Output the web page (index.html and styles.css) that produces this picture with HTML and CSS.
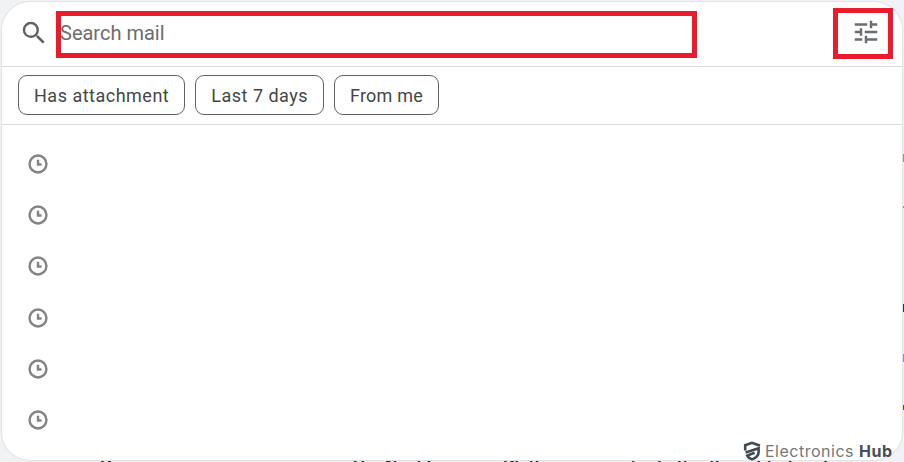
FILE: index.html
```html
<!DOCTYPE html>
<html lang="en">

<head>
    <meta charset="UTF-8">
    <meta name="viewport" content="width=device-width, initial-scale=1.0">
    <title>Search mail</title>
    <link rel="stylesheet" href="styles.css">
</head>

<body>
    <div class="behind-text">
        <span class="behind-left">Basic</span>
        <span class="behind-right">The Next Learning Platform can enter better thought of and</span>
    </div>
    <span class="edge-mark edge-mark-1"></span>
    <span class="edge-mark edge-mark-2"></span>
    <span class="edge-mark edge-mark-3"></span>
    <span class="edge-mark edge-mark-4"></span>
    <span class="edge-mark edge-mark-5"></span>

    <div class="card">
        <div class="search-row">
            <svg class="search-icon" viewBox="0 0 24 24">
                <path d="M15.5 14h-.79l-.28-.27A6.47 6.47 0 0 0 16 9.5 6.5 6.5 0 1 0 9.5 16c1.61 0 3.09-.59 4.23-1.57l.27.28v.79l5 4.99L20.49 19l-4.99-5zm-6 0C7.01 14 5 11.99 5 9.5S7.01 5 9.5 5 14 7.01 14 9.5 11.99 14 9.5 14z"/>
            </svg>
            <span class="search-text">Search mail</span>
            <svg class="tune-icon" viewBox="0 0 24 24">
                <path d="M3 17v2h6v-2H3zM3 5v2h10V5H3zm10 16v-2h8v-2h-8v-2h-2v6h2zM7 9v2H3v2h4v2h2V9H7zm14 4v-2H11v2h10zm-6-4h2V7h4V5h-4V3h-2v6z"/>
            </svg>
        </div>

        <div class="chip-row">
            <span class="chip">Has attachment</span>
            <span class="chip">Last 7 days</span>
            <span class="chip">From me</span>
        </div>

        <ul class="history">
            <li><svg class="clock" viewBox="0 0 18 18"><circle cx="9" cy="9" r="7.6"/><path d="M9 5.2V9.5H12.2"/></svg></li>
            <li><svg class="clock" viewBox="0 0 18 18"><circle cx="9" cy="9" r="7.6"/><path d="M9 5.2V9.5H12.2"/></svg></li>
            <li><svg class="clock" viewBox="0 0 18 18"><circle cx="9" cy="9" r="7.6"/><path d="M9 5.2V9.5H12.2"/></svg></li>
            <li><svg class="clock" viewBox="0 0 18 18"><circle cx="9" cy="9" r="7.6"/><path d="M9 5.2V9.5H12.2"/></svg></li>
            <li><svg class="clock" viewBox="0 0 18 18"><circle cx="9" cy="9" r="7.6"/><path d="M9 5.2V9.5H12.2"/></svg></li>
            <li><svg class="clock" viewBox="0 0 18 18"><circle cx="9" cy="9" r="7.6"/><path d="M9 5.2V9.5H12.2"/></svg></li>
        </ul>
    </div>

    <!-- red annotation boxes on top of the screenshot -->
    <div class="highlight highlight-search"></div>
    <div class="highlight highlight-tune"></div>

    <div class="watermark">
        <svg class="watermark-logo" viewBox="0 0 18 20">
            <path d="M2.2 9.6V4.2L9 1.8L15.8 4.2V5.6"/>
            <path d="M2.6 11.4L15.6 7.2V11C15.6 14.6 12.8 17 9 18.4C6.8 17.6 5 16.2 4.2 14.6L11.6 11.8"/>
        </svg>
        <span class="watermark-name">Electronics <b>Hub</b></span>
    </div>
</body>

</html>
```

FILE: styles.css
```css
html,
body {
    margin: 0;
    height: 100%;
}

body {
    position: relative;
    width: 904px;
    height: 462px;
    overflow: hidden;
    background: #f1f2f5;
    font-family: Roboto, Arial, sans-serif;
    color: #444746;
}

.card {
    position: relative;
    box-sizing: border-box;
    width: 900px;
    height: 458px;
    margin: 2px 0 0 2px;
    background: #fff;
    border-radius: 28px;
    box-shadow: 0 0 0 1px #e2e3e6;
    overflow: hidden;
}

.search-row {
    display: flex;
    align-items: center;
    height: 62px;
    padding: 0 21px 2px 17px;
    border-bottom: 1px solid #dcdcdc;
}

.search-icon {
    width: 30px;
    height: 30px;
    fill: #5f6368;
}

.search-text {
    flex: 1;
    margin-left: 11px;
    font-size: 20px;
    color: #6d6d6d;
}

.tune-icon {
    width: 30px;
    height: 30px;
    margin-bottom: 2px;
    fill: #6a6d71;
}

.chip-row {
    display: flex;
    gap: 10px;
    padding-left: 16px;
    padding-top: 8px;
    box-sizing: border-box;
    border-bottom: 1px solid #dcdcdc;
    height: 58px;
}

.chip {
    display: flex;
    align-items: center;
    height: 40px;
    padding: 0 15px;
    box-sizing: border-box;
    border: 1px solid #5f6368;
    border-radius: 9px;
    font-size: 18px;
    letter-spacing: 0.5px;
}

.chip:last-child {
    letter-spacing: 0.2px;
}

.history {
    list-style: none;
    margin: 0;
    padding: 13px 0 0 26px;
}

.history li {
    display: flex;
    align-items: center;
    height: 51.3px;
}

.clock {
    width: 20px;
    height: 20px;
    fill: none;
    stroke: #848484;
    stroke-width: 2.2;
}

.highlight {
    position: absolute;
    box-sizing: border-box;
    border: 5px solid #e81c2a;
}

.highlight-search {
    left: 56px;
    top: 11px;
    width: 641px;
    height: 47px;
}

.highlight-tune {
    left: 833px;
    top: 8px;
    width: 60px;
    height: 51px;
}

.watermark {
    position: absolute;
    left: 743px;
    top: 441px;
    display: flex;
    align-items: center;
    gap: 4px;
}

.watermark-logo {
    width: 18px;
    height: 20px;
    fill: none;
    stroke: #3d4a50;
    stroke-width: 2.6;
}

.watermark-name {
    font-family: Inter, Arial, sans-serif;
    font-size: 16px;
    letter-spacing: 0.5px;
    color: #777;
}

.watermark-name b {
    color: #454f55;
}

.behind-text {
    position: absolute;
    left: 0;
    top: 456px;
    width: 904px;
    font-family: "Liberation Sans", Arial, sans-serif;
    font-size: 17px;
    font-weight: bold;
    color: #222;
    white-space: nowrap;
}

.behind-left {
    position: absolute;
    left: 100px;
}

.behind-right {
    position: absolute;
    left: 350px;
}

.edge-mark {
    position: absolute;
    left: 902px;
    width: 2px;
    height: 8px;
    background: #8c93a0;
}

.edge-mark-1 {
    top: 154px;
}

.edge-mark-2 {
    top: 206px;
    height: 2px;
}

.edge-mark-3 {
    top: 304px;
    background: #1d3a5c;
}

.edge-mark-4 {
    top: 354px;
}

.edge-mark-5 {
    top: 405px;
    height: 5px;
    background: #6b4a1f;
}
```
